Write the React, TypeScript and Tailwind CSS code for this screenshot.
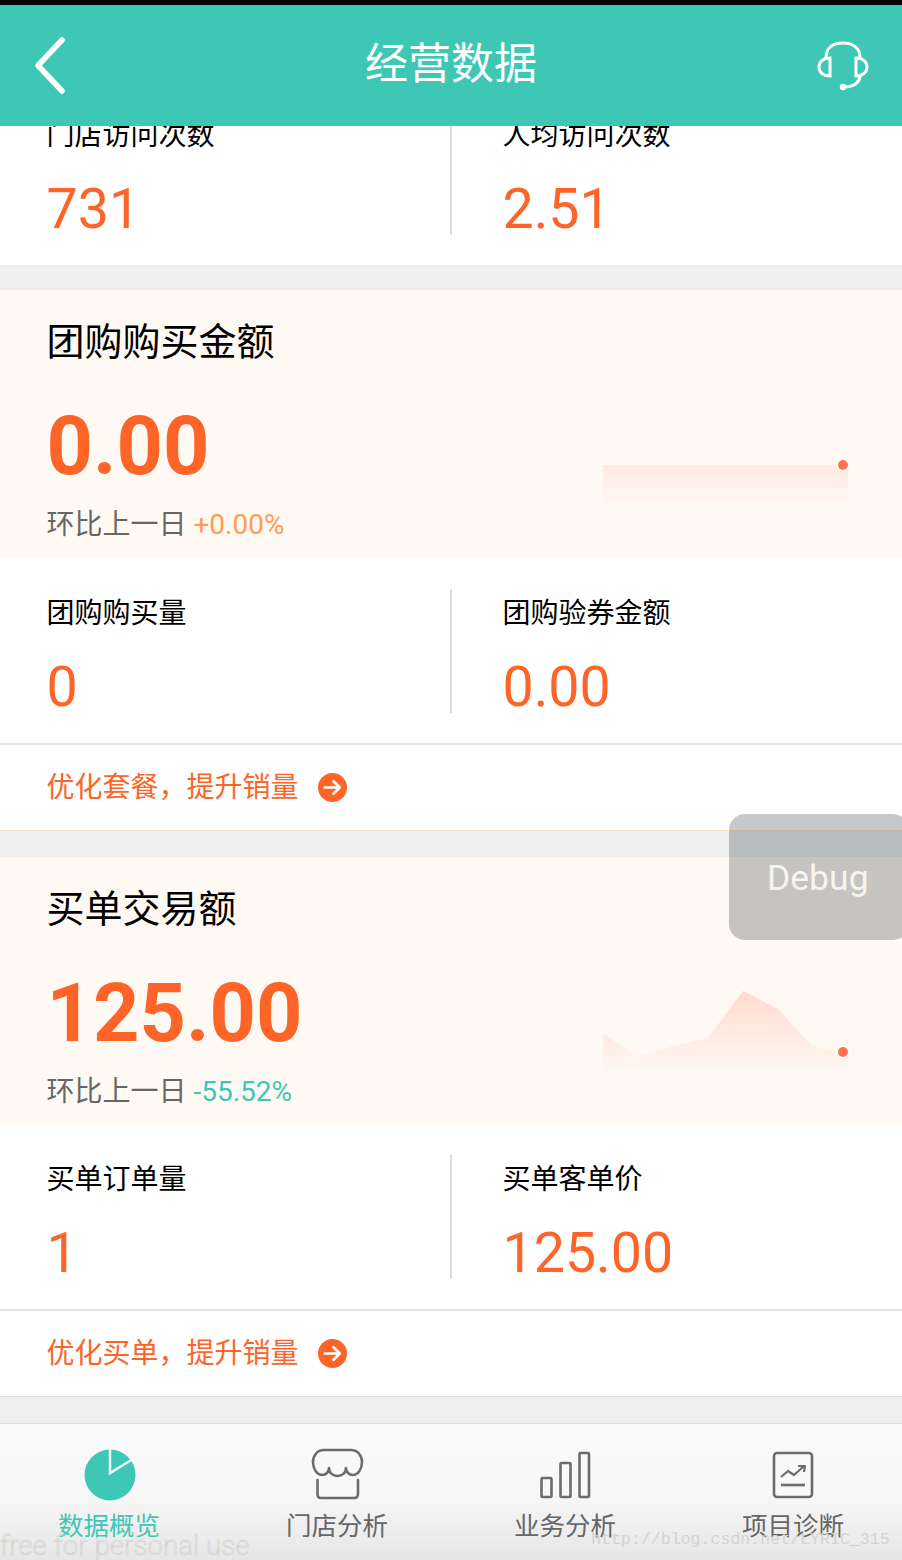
const ORANGE = '#fd6428';

function Metric({ left, right }: { left: [string, string]; right: [string, string] }) {
  return (
    <div className="flex h-[185px] bg-white pt-[31px]">
      <div className="h-[124px] w-[452px] border-r-2 border-[#dcdcdc] pl-[46.5px] pt-[5px]">
        <div className="text-[28px] leading-[40px] text-black">{left[0]}</div>
        <div className="mt-[24px] text-[55.5px] leading-[60px] text-[#fd6428]">{left[1]}</div>
      </div>
      <div className="h-[124px] pl-[50.5px] pt-[5px]">
        <div className="text-[28px] leading-[40px] text-black">{right[0]}</div>
        <div className="mt-[24px] text-[55.5px] leading-[60px] text-[#fd6428]">{right[1]}</div>
      </div>
    </div>
  );
}

function Sparkline({ id, points, dotY }: { id: string; points: string; dotY: number }) {
  return (
    <svg width="250" height="100" viewBox="0 0 250 100" className="mt-[130px] mr-[52px] shrink-0">
      <defs>
        <linearGradient id={id} gradientUnits="userSpaceOnUse" x1="0" y1="0" x2="0" y2="88">
          <stop offset="0" stopColor="#ffdacc" />
          <stop offset="1" stopColor="#fff9f4" />
        </linearGradient>
      </defs>
      <polygon points={points} fill={`url(#${id})`} />
      <circle cx="243" cy={dotY} r="6.5" fill="#fff" />
      <circle cx="243" cy={dotY} r="5" fill="#ff7450" />
    </svg>
  );
}

function SummaryCard(props: {
  title: string;
  amount: string;
  change: string;
  up: boolean;
  id: string;
  points: string;
  dotY: number;
  height: string;
}) {
  return (
    <div className={`flex justify-between bg-[#fff9f3] pl-[46.5px] ${props.height}`}>
      <div>
        <div className="mt-[26px] text-[38px] leading-[52px] text-black">{props.title}</div>
        <div className="mt-[39px] text-[81px] font-bold leading-[80px] text-[#fd6428]">{props.amount}</div>
        <div className="mt-[18px] text-[28px] leading-[40px] text-[#666666]">
          环比上一日 <span className={props.up ? 'text-[#ff9c55]' : 'text-[#3fc7b5]'}>{props.change}</span>
        </div>
      </div>
      <Sparkline id={props.id} points={props.points} dotY={props.dotY} />
    </div>
  );
}

function LinkRow({ text, edge }: { text: string; edge: string }) {
  return (
    <div className={`flex h-[88px] items-center gap-[19px] border-t-2 border-b border-t-[#e2e2e2] bg-white pl-[46.5px] ${edge}`}>
      <span className="text-[28px] leading-[40px] text-[#fd6428]">{text}</span>
      <svg width="29" height="29" viewBox="0 0 30 30">
        <circle cx="15" cy="15" r="15" fill={ORANGE} />
        <path d="M7 15H22M16 8.5L22.5 15L16 21.5" fill="none" stroke="#fff" strokeWidth="2.8" strokeLinecap="round" strokeLinejoin="round" />
      </svg>
    </div>
  );
}

function Tab({ label, active, children }: { label: string; active?: boolean; children: React.ReactNode }) {
  return (
    <div className="flex flex-col items-center pt-[23px]">
      {children}
      <div className={`mt-[3px] text-[25.5px] leading-[40px] ${active ? 'text-[#3fc7b5]' : 'text-[#666666]'}`}>{label}</div>
    </div>
  );
}

export default function App() {
  return (
    <div className="relative flex h-[1560px] w-[902px] flex-col overflow-hidden bg-[#efefef] font-['Roboto','Noto_Sans_CJK_SC',sans-serif]">
      <div className="h-[5px] bg-black" />
      <div className="grid h-[121px] grid-cols-[1fr_auto_1fr] items-center bg-[#3fc7b5]">
        <svg width="40" height="62" viewBox="0 0 40 62" className="ml-[31px]">
          <path d="M31 5L7 30.5L31 56" fill="none" stroke="#fff" strokeWidth="5.5" strokeLinecap="round" strokeLinejoin="round" />
        </svg>
        <div className="pb-[3px] text-[43px] leading-[56px] text-white">经营数据</div>
        <svg width="56" height="56" viewBox="0 0 56 56" className="mr-[31px] justify-self-end">
          <g fill="none" stroke="#fff" strokeWidth="3" strokeLinecap="round">
            <path d="M11 20C11 10 18 5 28 5C38 5 45 10 45 20" />
            <path d="M15 20C8 20 4 24 4 29C4 34 8 38 15 38Z" />
            <path d="M41 20C48 20 52 24 52 29C52 34 48 38 41 38Z" />
            <path d="M45 39C44 45 38 49 30 49" />
          </g>
          <circle cx="28" cy="49" r="3.2" fill="#fff" />
        </svg>
      </div>

      <div className="min-h-0 flex-1 overflow-hidden">
        <div className="-mt-[46px]">
          <Metric left={['门店访问次数', '731']} right={['人均访问次数', '2.51']} />
        </div>
        <div className="h-[25px]" />
        <SummaryCard
          title="团购购买金额"
          amount="0.00"
          change="+0.00%"
          up
          id="fillA"
          points="3,45 248,45 248,88 3,88"
          dotY={45}
          height="h-[268px]"
        />
        <Metric left={['团购购买量', '0']} right={['团购验券金额', '0.00']} />
        <LinkRow text="优化套餐，提升销量" edge="border-b-[#fde6c8]" />
        <div className="h-[26px]" />
        <SummaryCard
          title="买单交易额"
          amount="125.00"
          change="-55.52%"
          up={false}
          id="fillB"
          points="3,46 37,70 73,59 108,51 143,4 178,22 212,59 243,65 248,66 248,88 3,88"
          dotY={65}
          height="h-[267px]"
        />
        <Metric left={['买单订单量', '1']} right={['买单客单价', '125.00']} />
        <LinkRow text="优化买单，提升销量" edge="border-b-[#e2e2e2]" />
      </div>

      <div className="grid h-[137px] grid-cols-4 -mx-[5px] border-t border-[#e2e2e2] bg-gradient-to-b from-[#fafafa] via-[#f8f8f8] to-[#e6e6e6]">
        <Tab label="数据概览" active>
          <svg width="56" height="56" viewBox="0 0 56 56">
            <circle cx="29" cy="28" r="25.5" fill="#3fc7b5" />
            <path d="M29 1V26L52 12" fill="none" stroke="#f9f9f9" strokeWidth="2.4" />
          </svg>
        </Tab>
        <Tab label="门店分析">
          <svg width="56" height="56" viewBox="0 0 56 56">
            <g fill="none" stroke="#6b6b70" strokeWidth="2.6" strokeLinecap="round" strokeLinejoin="round" transform="translate(1 0)">
              <path d="M14 3H41C48 3 52 9 52 15C52 22 48 28 43 28C39 28 36 25 36 21C36 26 32 29 27.5 29C23 29 19 26 19 21C19 25 16 28 12 28C7 28 3 22 3 15C3 9 7 3 14 3Z" />
              <path d="M7.5 33V47Q7.5 51 11 51H44Q48 51 48 47V33" />
            </g>
          </svg>
        </Tab>
        <Tab label="业务分析">
          <svg width="56" height="56" viewBox="0 0 56 56">
            <g fill="none" stroke="#6b6b70" strokeWidth="2.6" strokeLinejoin="round" transform="translate(2.5 0)">
              <rect x="2" y="31" width="10" height="19" rx="1" />
              <rect x="21" y="16" width="10" height="34" rx="1" />
              <rect x="40" y="6" width="9.5" height="44" rx="1" />
            </g>
          </svg>
        </Tab>
        <Tab label="项目诊断">
          <svg width="56" height="56" viewBox="0 0 56 56">
            <g fill="none" stroke="#6b6b70" strokeLinejoin="round">
              <rect x="9" y="6" width="38" height="44" rx="3" strokeWidth="2.6" />
              <path d="M16 30L23 24L29 28L39 19M33 19H40L39 25" strokeWidth="2.2" />
              <path d="M16 38H40" strokeWidth="2.6" />
            </g>
          </svg>
        </Tab>
      </div>

      {/* floating debug button and the two watermarks burnt into the screenshot */}
      <div className="absolute left-[729px] top-[814px] flex h-[126px] w-[180px] justify-start rounded-[16px] bg-[rgba(28,40,38,0.25)] pl-[38px] pt-[42px] text-[35.5px] leading-[44px] text-[#f6f4ee]">
        Debug
      </div>
      <div className="absolute bottom-[-4px] left-0 text-[27.7px] font-light leading-[36px] text-transparent [-webkit-text-stroke:0.6px_#d0d0d0]">
        free for personal use
      </div>
      <div className="absolute left-[591px] top-[1530px] font-['Liberation_Mono',monospace] text-[16.6px] leading-[20px] text-[#d4d4cf]">
        http://blog.csdn.net/LYRIC_315
      </div>
    </div>
  );
}
